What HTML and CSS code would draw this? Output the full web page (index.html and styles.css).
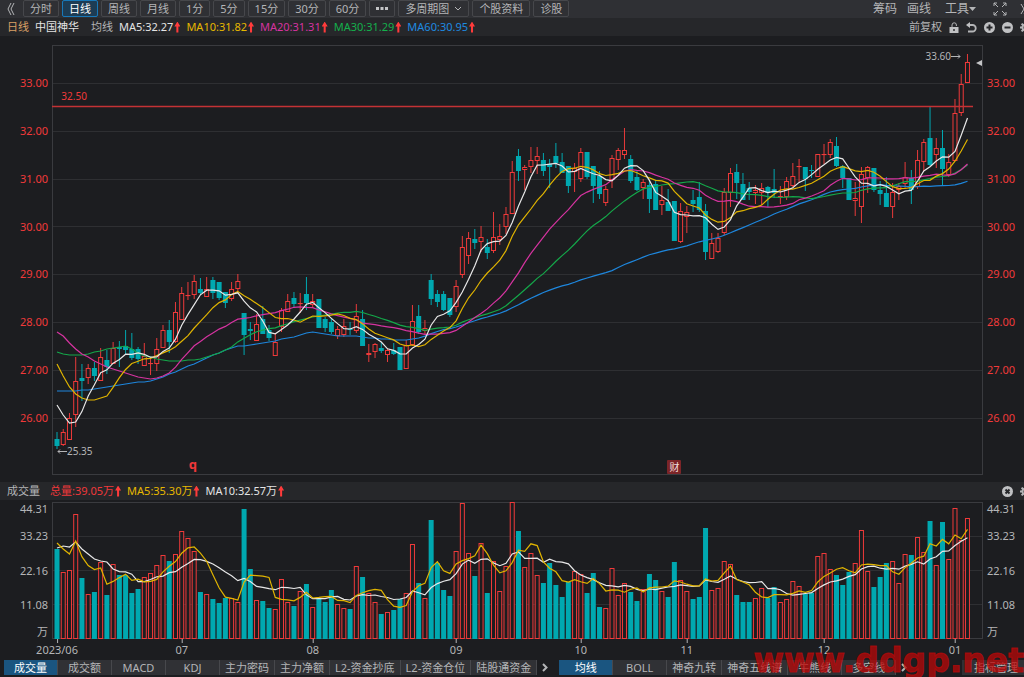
FILE: index.html
```html
<!DOCTYPE html>
<html lang="zh-CN">
<head>
<meta charset="utf-8">
<title>中国神华 日线</title>
<link rel="stylesheet" href="styles.css">
</head>
<body>
<header class="toolbar">
  <button class="icon-btn collapse" aria-label="收起">
    <svg width="8" height="12" viewBox="0 0 8 12"><path d="M4 0 1 6l3 6M7 0 4 6l3 6"/></svg>
  </button>
  <nav class="periods">
    <button class="period">分时</button>
    <button class="period active">日线</button>
    <button class="period">周线</button>
    <button class="period">月线</button>
    <button class="period">1分</button>
    <button class="period">5分</button>
    <button class="period">15分</button>
    <button class="period">30分</button>
    <button class="period">60分</button>
    <button class="period" aria-label="更多"><svg class="dots" width="12" height="3" viewBox="0 0 12 3"><path d="M0 0h3v3H0zM4.500 0h3v3h-3zM9 0h3v3H9z"/></svg></button>
    <button class="period">多周期图<svg class="caret" width="8" height="5" viewBox="0 0 8 5"><path d="M1 1l3 3 3-3"/></svg></button>
    <button class="period">个股资料</button>
    <button class="period">诊股</button>
  </nav>
  <div class="tools">
    <button class="tool">筹码</button>
    <button class="tool">画线</button>
    <button class="tool wide">工具<svg class="solid" width="7" height="4" viewBox="0 0 7 4"><path d="M0 0h7L3.500 4z"/></svg></button>
    <button class="icon-btn" aria-label="全屏"><svg width="14" height="14" viewBox="0 0 14 14"><path d="M1 4V1h3M1 1l4 4M10 1h3v3M13 1 9 5M1 10v3h3M1 13l4-4M13 10v3h-3M13 13 9 9"/></svg></button>
    <button class="icon-btn" aria-label="展开"><svg width="8" height="12" viewBox="0 0 8 12"><path d="M1 1l3 5-3 5M4 1l3 5-3 5"/></svg></button>
  </div>
</header>

<div class="infobar">
  <span class="tan">日线</span>
  <span class="name">中国神华</span>
  <span class="label">均线</span>
  <span class="white">MA5:32.27<i class="up"></i></span>
  <span class="yellow">MA10:31.82<i class="up"></i></span>
  <span class="magenta">MA20:31.31<i class="up"></i></span>
  <span class="green">MA30:31.29<i class="up"></i></span>
  <span class="blue">MA60:30.95<i class="up"></i></span>
  <div class="actions">
    <button class="text-btn">前复权</button>
    <button class="icon-btn" aria-label="解锁"><svg width="10" height="11" viewBox="0 0 10 11"><path d="M3 5V3a2.200 2.200 0 0 1 4.400 0v1"/><path class="fill" fill-rule="evenodd" d="M0.500 5h9v6h-9zM4.300 7v2h1.400V7z"/></svg></button>
    <button class="icon-btn" aria-label="撤销"><svg width="11" height="11" viewBox="0 0 11 11"><path stroke-width="1.800" d="M2 3h4.500a3.200 3.200 0 0 1 0 6.500H2"/><path class="fill" d="M0 3 4 0v6z"/></svg></button>
    <button class="icon-btn" aria-label="放大"><svg width="11" height="11" viewBox="0 0 11 11"><circle class="fill" cx="5.500" cy="5.500" r="5.500"/><path class="cut" d="M2.500 5.500h6M5.500 2.500v6"/></svg></button>
    <button class="icon-btn" aria-label="缩小"><svg width="11" height="11" viewBox="0 0 11 11"><circle class="fill" cx="5.500" cy="5.500" r="5.500"/><path class="cut" d="M2.500 5.500h6"/></svg></button>
    <button class="icon-btn" aria-label="设置"><svg width="11" height="11" viewBox="0 0 11 11"><circle cx="5.500" cy="5.500" r="3" stroke-width="2"/><path stroke-width="2" d="M5.500 0v2M5.500 9v2M0 5.500h2M9 5.500h2M1.600 1.600l1.400 1.400M8 8l1.400 1.400M1.600 9.400 3 8M8 3l1.400-1.400"/></svg></button>
  </div>
</div>

<main class="charts">
  <section class="row price">
    <div class="axis left"><span>33.00</span><span>32.00</span><span>31.00</span><span>30.00</span><span>29.00</span><span>28.00</span><span>27.00</span><span>26.00</span></div>
    <div class="plot">
      <svg id="price" viewBox="52 45 931 430" preserveAspectRatio="none" role="img" aria-label="K线图"></svg>
      <span class="mark alert">32.50</span>
      <span class="mark high">33.60<svg width="10" height="5" viewBox="0 0 10 5"><path d="M0 2.500h9M7 0.500l2 2-2 2"/></svg></span>
      <span class="mark low"><svg width="10" height="5" viewBox="0 0 10 5"><path d="M10 2.500H1M3 0.500l-2 2 2 2"/></svg>25.35</span>
      <span class="mark quote">q</span>
      <span class="mark report">财</span>
      <svg class="mark last" width="6" height="6" viewBox="0 0 6 6"><path d="M0 3 6 0v6z"/></svg>
    </div>
    <div class="axis right"><span>33.00</span><span>32.00</span><span>31.00</span><span>30.00</span><span>29.00</span><span>28.00</span><span>27.00</span><span>26.00</span></div>
  </section>

  <div class="infobar volume-info">
    <span class="label">成交量</span>
    <span class="red">总量:39.05万<i class="up"></i></span>
    <span class="yellow">MA5:35.30万<i class="up"></i></span>
    <span class="white">MA10:32.57万<i class="up"></i></span>
    <div class="actions">
      <button class="icon-btn" aria-label="关闭"><svg width="11" height="11" viewBox="0 0 11 11"><circle class="fill" cx="5.500" cy="5.500" r="5.500"/><path class="cut" d="M3.500 3.500l4 4M7.500 3.500l-4 4"/></svg></button>
      <button class="icon-btn" aria-label="指标设置"><svg width="11" height="11" viewBox="0 0 11 11"><circle cx="5.500" cy="5.500" r="3" stroke-width="2"/><path stroke-width="2" d="M5.500 0v2M5.500 9v2M0 5.500h2M9 5.500h2M1.600 1.600l1.400 1.400M8 8l1.400 1.400M1.600 9.400 3 8M8 3l1.400-1.400"/></svg></button>
    </div>
  </div>

  <section class="row volume">
    <div class="axis left"><span>44.31</span><span>33.23</span><span>22.16</span><span>11.08</span><span>万</span></div>
    <div class="plot"><svg id="volume" viewBox="52 502 931 137" preserveAspectRatio="none" role="img" aria-label="成交量图"></svg></div>
    <div class="axis right"><span>44.31</span><span>33.23</span><span>22.16</span><span>11.08</span><span>万</span></div>
  </section>
  <div class="row dates"><div class="timeline" id="dates"></div></div>
</main>

<footer class="tabs">
  <nav class="group">
    <button class="tab active">成交量</button>
    <button class="tab">成交额</button>
    <button class="tab">MACD</button>
    <button class="tab">KDJ</button>
    <button class="tab">主力密码</button>
    <button class="tab">主力净额</button>
    <button class="tab">L2-资金抄底</button>
    <button class="tab">L2-资金仓位</button>
    <button class="tab">陆股通资金</button>
  </nav>
  <button class="icon-btn next" aria-label="下一组"><svg width="6" height="9" viewBox="0 0 6 9"><path stroke-width="2" d="M1 1l3.500 3.500L1 8"/></svg></button>
  <nav class="group">
    <button class="tab active">均线</button>
    <button class="tab">BOLL</button>
    <button class="tab">神奇九转</button>
    <button class="tab">神奇五线谱</button>
    <button class="tab">牛熊线</button>
    <button class="tab">多空线</button>
  </nav>
  <button class="icon-btn next" aria-label="下一组"><svg width="6" height="9" viewBox="0 0 6 9"><path stroke-width="2" d="M1 1l3.500 3.500L1 8"/></svg></button>
  <button class="tab manage">指标管理</button>
  <div class="watermark">www.ddgp.net</div>
</footer>
<script src="chart.js"></script>
</body>
</html>
```

FILE: styles.css
```css
* { box-sizing: border-box; }

body {
  margin: 0;
  min-height: 100vh;
  display: flex;
  flex-direction: column;
  overflow: hidden;
  background: #1c1d20;
  color: #b4b5b7;
  font: 11px/16px "Noto Sans", "Noto Sans CJK SC", sans-serif;
}

button {
  padding: 0;
  border: 0;
  background: none;
  color: inherit;
  font: inherit;
  white-space: nowrap;
}

svg { fill: none; stroke: #b4b5b7; }
.fill { fill: #c0c1c3; stroke: none; }
.cut { stroke: #26272a; stroke-width: 2; }

.icon-btn { display: flex; align-items: center; }

.toolbar {
  display: flex;
  align-items: center;
  height: 18px;
  padding-left: 7px;
  background: #2f3034;
}

.periods { display: flex; gap: 3px; margin-left: 8px; height: 18px; }

.period {
  display: flex;
  align-items: center;
  gap: 5px;
  height: 17px;
  padding: 0 6px;
  border: 1px solid #46474b;
  border-radius: 2px;
}

.period.active { border-color: #1878b8; background: #1d3c54; color: #fff; }
.dots { fill: #c4c5c7; stroke: none; }

.tools {
  display: flex;
  align-items: center;
  gap: 10px;
  margin-left: auto;
  margin-right: -4px;
  font-size: 12px;
}

.tool { display: flex; align-items: center; }
.tool.wide { margin: 0 7px 0 4px; }
.solid { fill: #b4b5b7; stroke: none; }
.tools .icon-btn + .icon-btn { margin-left: 3px; }

.infobar {
  display: flex;
  align-items: center;
  height: 18px;
  padding-left: 7px;
  overflow: hidden;
  background: #26272a;
  white-space: nowrap;
}

.infobar > span { display: flex; align-items: center; margin-right: 6px; }
.infobar > .name { color: #e4e4e4; margin-right: 12px; }
.tan { color: #d9a066; }
.white { color: #e4e4e4; }
.yellow { color: #e6b800; }
.magenta { color: #d633a0; }
.green { color: #14b04c; }
.blue { color: #1e8ae0; }
.red { color: #f0383a; }

.up {
  width: 6px;
  height: 11px;
  margin-left: 1px;
  background: #ff3b3b;
  clip-path: polygon(50% 0, 100% 45%, 67% 45%, 67% 100%, 33% 100%, 33% 45%, 0 45%);
}

.actions { display: flex; align-items: center; gap: 7px; margin-left: auto; margin-right: -7px; }

.charts { flex: 1; display: flex; flex-direction: column; padding-top: 9px; }
.row { display: grid; grid-template-columns: 52px 1fr 41px; }
.price { flex: 1; min-height: 300px; }
.plot { position: relative; min-height: 0; }
.plot > svg:first-child { position: absolute; width: 100%; height: 100%; }

.axis { display: grid; align-items: center; line-height: 14px; }
.axis.left { text-align: right; padding-right: 4px; }
.axis.right { padding-left: 4px; }
.price .axis { grid-auto-rows: 1fr; padding-top: 14px; padding-bottom: 33px; color: #f03a3a; }
.volume .axis { grid-template-rows: 1fr 2fr 2fr 2fr 1fr; }
.volume .axis > :first-child { align-self: start; }
.volume .axis > :last-child { align-self: end; }

.volume-info { margin: 7px 0 2px; }
.volume-info > .label { margin-right: 10px; }
.volume { height: 137px; }
.dates { height: 20px; }
.timeline { grid-column: 2; position: relative; }

.date {
  position: absolute;
  top: 0;
  padding-top: 3px;
  transform: translateX(-50%);
}

.date::before {
  content: "";
  position: absolute;
  top: 0;
  left: 50%;
  width: 1px;
  height: 4px;
  background: #b4b5b7;
}

.mark { position: absolute; display: flex; align-items: center; font-size: 10px; line-height: 12px; }
.alert { left: 1%; top: 45px; color: #f03a3a; }
.high { right: 22px; top: 5px; }
.low { left: 5px; bottom: 18px; }
.quote { left: 14.700%; bottom: 5px; color: #f0383a; font-size: 13px; font-weight: 700; }
.report {
  left: 66.100%;
  bottom: 1px;
  padding: 1px 2px;
  border-radius: 1px;
  background: #7c2528;
  color: #f0dede;
}
.last { right: 1px; top: 15px; fill: #c4c5c7; stroke: none; }

.grid { stroke: #2e2f32; }
.frame { stroke: #3a3b3f; }
.alert-line { stroke: #c43234; stroke-width: 1.500; }
.rise { fill: #1c1d20; stroke: #f03a3a; }
.fall { fill: #00a8b0; stroke: none; }
.wick-rise { stroke: #e83a3a; }
.wick-fall { stroke: #00a8b0; }
.ma { stroke-width: 1.200; }
.ma5 { stroke: #e8e8e8; }
.ma10 { stroke: #e0b400; }
.ma20 { stroke: #d633a0; }
.ma30 { stroke: #14a84a; }
.ma60 { stroke: #1e86dc; }

.tabs {
  position: relative;
  display: flex;
  align-items: flex-start;
  height: 18px;
  padding: 1px 0 2px 4px;
}

.group { display: flex; }

.tab {
  min-width: 54px;
  height: 15px;
  padding: 0 5px;
  border-right: 1px solid #47484c;
  background: #303135;
  line-height: 15px;
}

.tab.active { background: #1a5580; color: #fff; }
.next { height: 15px; margin: 0 11px 0 5px; }
.manage { margin-left: auto; padding: 0 6px 0 12px; border: 0; }

.watermark {
  position: absolute;
  right: 0;
  bottom: -3px;
  color: rgba(190, 8, 8, 0.72);
  font: bold 33px/38px "DejaVu Sans", sans-serif;
  -webkit-text-stroke: 1px rgba(190, 8, 8, 0.72);
  pointer-events: none;
}
```

FILE: chart.js
```js
// One entry per trading day: direction, body top, body bottom, high, low, volume top.
const days = `
f 439 446 432 449 549|r 432 445 429 446 572|r 418 440 413 440 570|r 381 415 357 427 514|f 378 381 364 401 578
r 368 378 364 384 594|f 368 376 362 381 592|r 357 381 348 381 562|f 360 367 350 374 595|r 348 364 342 364 564
f 347 349 341 367 575|f 346 350 330 354 575|f 349 358 333 360 593|f 349 359 347 364 589|r 356 366 343 366 577
r 363 364 357 375 573|r 349 364 338 371 565|r 330 348 325 348 555|f 330 342 320 353 561|r 312 342 302 343 554
r 293 320 287 320 531|r 295 296 282 300 538|r 281 295 275 299 551|f 289 293 278 295 592|r 289 297 277 297 594
f 280 293 277 299 599|f 282 298 282 300 603|f 292 303 292 308 598|r 289 299 282 301 598|r 281 289 274 291 602
f 313 335 313 355 509|f 329 331 322 340 569|r 324 341 314 341 600|f 319 334 306 334 601|f 330 338 325 341 608
r 342 356 334 356 609|r 310 327 308 332 579|r 301 312 294 312 602|f 298 304 292 308 606|r 303 304 293 313 591
f 294 303 277 310 584|r 301 305 294 308 607|f 299 328 299 328 599|f 319 328 317 332 602|f 322 332 318 334 590
r 329 336 326 339 604|r 326 335 319 337 608|f 329 330 322 335 609|r 316 331 304 333 566|f 319 346 310 346 577
r 353 355 344 362 593|r 344 352 343 358 602|f 348 351 342 353 614|r 350 355 348 362 612|f 350 354 343 355 610
f 347 370 347 370 599|r 345 369 340 369 593|r 321 345 305 346 544|f 316 332 305 334 583|r 328 331 320 334 598
f 280 299 274 305 520|f 294 302 290 307 563|f 294 310 291 311 590|f 298 315 298 317 596|r 286 307 280 312 551
r 247 275 236 278 503|r 238 256 232 264 553|f 239 243 229 249 576|r 237 242 226 252 543|f 247 253 239 259 593
r 237 251 212 253 561|r 236 240 224 245 591|r 214 227 207 234 566|r 172 214 161 214 502|f 156 171 149 181 531
r 167 170 165 190 567|r 160 167 147 173 553|r 156 161 147 174 575|f 160 171 153 176 583|f 164 167 159 188 563
f 156 163 143 168 585|f 162 173 153 173 597|f 166 186 166 193 582|r 168 172 163 192 571|r 152 179 148 182 574
f 152 177 152 179 593|f 166 186 166 203 573|f 176 194 171 199 607|r 189 203 186 206 608|r 158 180 155 188 568
r 150 160 148 170 595|r 150 155 128 159 583|f 159 181 155 183 592|f 177 190 171 191 601|r 182 188 179 199 589
f 185 199 180 213 574|f 184 210 180 210 580|r 200 205 186 215 591|f 202 211 189 211 597|f 201 241 201 241 562
r 211 242 203 243 580|r 212 217 206 233 591|f 200 204 190 212 599|f 197 210 182 212 597|f 211 252 204 260 528
r 243 259 233 259 590|r 238 252 233 253 588|r 192 233 188 235 561|r 173 193 168 207 564|f 172 183 164 199 595
f 184 200 173 200 602|f 188 192 182 200 602|r 190 193 185 204 598|r 188 193 183 205 588|f 187 193 186 207 598
f 189 193 169 198 587|r 196 197 186 204 602|r 181 197 177 200 599|r 176 186 163 187 581|r 166 167 159 182 586
f 167 179 167 191 594|f 170 171 165 178 593|r 154 177 154 177 556|r 154 155 144 164 553|r 142 155 139 158 569
f 146 166 137 167 575|f 166 178 165 188 585|f 178 200 178 200 572|r 198 201 182 216 563|r 174 207 167 223 530
r 167 178 166 193 571|f 168 190 168 192 587|f 190 194 181 205 577|f 193 207 177 207 563|r 192 207 183 218 561
r 186 190 183 200 583|r 177 184 162 188 554|f 178 190 170 204 555|r 160 187 150 189 537|r 142 162 139 171 552
f 138 165 106 166 521|r 148 155 138 168 565|f 148 169 130 186 522|r 162 175 154 177 559|r 113 161 99 161 508
r 84 113 74 116 540|r 62 83 54 83 518`
  .trim().split(/[\n|]/).map(line => {
    const [dir, ...nums] = line.split(' ');
    const [top, bottom, high, low, vol] = nums.map(Number);
    return { rise: dir === 'r', top, bottom, high, low, vol };
  });

const x = i => 57 + i * 6.236;

// Averages for the first days, where the window reaches back before the visible range.
const lead = {
  5: [405, 415, 423, 422],
  10: [364, 376, 387, 394, 398, 400, 400, 398, 396],
  20: [332, 336, 343, 349, 354, 357, 361, 364, 367, 369, 371, 373, 375, 377, 378, 379, 378, 376, 373],
  30: [352, 354, 355, 355, 355, 354, 352, 351, 349, 348, 347, 346, 349, 353, 356, 357, 359, 360, 361, 361, 361, 360, 360, 359, 357, 355, 353, 350, 347],
  60: [391, 391, 391, 391, 390, 390, 389, 388, 387, 386, 385, 384, 383, 382, 382, 381, 379, 377, 374, 372, 369, 366, 364, 361, 358, 355, 353, 350, 348, 346, 346, 345, 344, 343, 342, 341, 339, 338, 337, 335, 333, 332, 333, 334, 335, 336, 336, 336, 336, 337, 338, 338, 339, 339, 340, 340, 340, 339, 338]
};
const volumeLead = {
  5: [543, 549, 554, 541],
  10: [548, 546, 547, 542, 549, 554, 559, 561, 562]
};

function average(values, n, head) {
  const points = values.map((_, i) => {
    const y = i < n - 1
      ? head[i]
      : values.slice(i - n + 1, i + 1).reduce((a, b) => a + b, 0) / n;
    return `${x(i).toFixed(1)},${y.toFixed(1)}`;
  });
  return `<polyline class="ma ma${n}" points="${points.join(' ')}"/>`;
}

const hline = (y, cls = 'grid', end = 983) => `<path class="${cls}" d="M52 ${y}H${end}"/>`;

function body(i, top, bottom, rise) {
  const h = bottom - top;
  return rise
    ? `<rect class="rise" x="${x(i) - 2}" y="${top + 0.5}" width="4" height="${Math.max(h - 1, 0.1)}"/>`
    : `<rect class="fall" x="${x(i) - 2.5}" y="${top}" width="5" height="${Math.max(h, 1)}"/>`;
}

const closes = days.map(d => d.rise ? d.top : d.bottom);
document.getElementById('price').innerHTML =
  [83.5, 131.5, 179.5, 226.5, 274.5, 322.5, 370.5, 418.5].map(y => hline(y)).join('') +
  '<rect class="frame" x="52.5" y="45.5" width="930" height="429"/>' +
  days.map((d, i) =>
    `<path class="wick-${d.rise ? 'rise' : 'fall'}" d="M${x(i)} ${d.high}V${d.low}"/>` +
    body(i, d.top, d.bottom, d.rise)).join('') +
  hline(106.5, 'alert-line', 973) +
  [60, 30, 20, 10, 5].map(n => average(closes, n, lead[n])).join('');

const volumes = days.map(d => d.vol);
document.getElementById('volume').innerHTML =
  [536.5, 570.5, 604.5].map(y => hline(y)).join('') +
  '<rect class="frame" x="52.5" y="502.5" width="930" height="136"/>' +
  days.map((d, i) => body(i, d.vol, 639, d.rise)).join('') +
  [10, 5].map(n => average(volumes, n, volumeLead[n]).replace(`ma${n}`, n === 5 ? 'ma10' : 'ma5')).join('');

const months = [[0, '2023/06'], [20, '07'], [41, '08'], [64, '09'], [84, '10'], [101, '11'], [123, '12'], [144, '01']];
document.getElementById('dates').innerHTML = months.map(([i, text]) =>
  `<span class="date" style="left:${((x(i) - 52) / 9.31).toFixed(2)}%">${text}</span>`).join('');
```
